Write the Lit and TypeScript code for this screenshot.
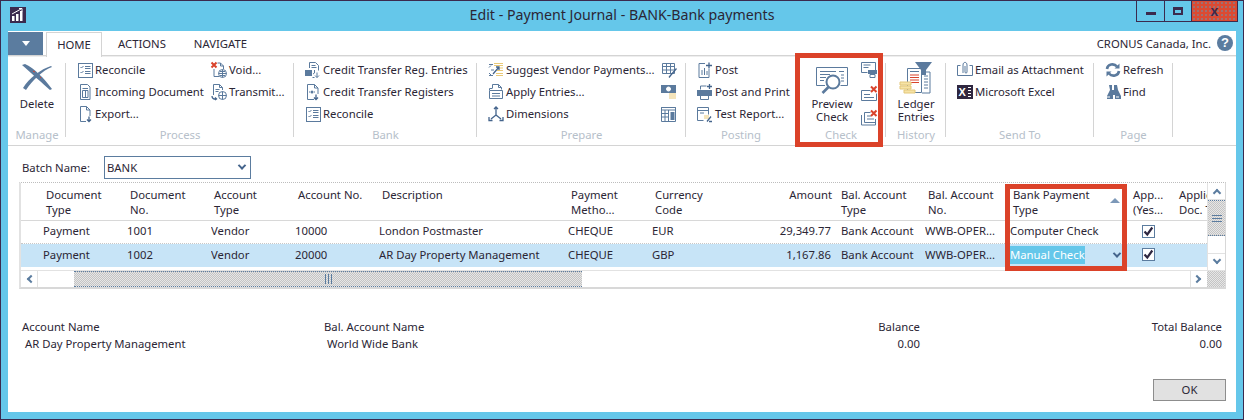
import { LitElement, html, css, svg } from "lit";
import { customElement } from "lit/decorators.js";

const I: Record<string, any> = {
  reconcile: svg`<rect x="1.500" y="1.500" width="14" height="14"/><path d="M3.500 5l1 1 2-2M3.500 10l1 1 2-2M8 4.500h5.500M8 6.500h5.500M8 9.500h5.500M8 11.500h5.500"/>`,
  incoming: svg`<path d="M3.500.5h7l2.500 2.500v12.500h-9.500zM5.500 4.500h5.500M5.500 6.500h5.500v7h-5.500zM8.500 6.500v7"/>`,
  exportDoc: svg`<path d="M9 15.500h-5.500v-15h6l3.500 3.500v6M9.500.5v3.500h3.500"/><path class="d" d="M12 10.500v5M10 13.500l2 2 2-2"/>`,
  voidDoc: svg`<path class="r2" d="M.5.5l5 5M5.500.5l-5 5"/><path d="M6.500 1h3l3 3v3M9.500 1v3h3M3 7v7.500h5"/><circle cx="11.500" cy="11.500" r="4"/><path d="M7.500 11.500h8M11.500 7.500v8M9 9.500h5M9 13.500h5"/>`,
  transmit: svg`<path d="M2.500 11v-10.500h6l3 3v2.500M8.500.5v3h3M4.500 5.500h4M4.500 7.500h3"/><path class="d" d="M1 12c0 2.500 2 3.500 4.500 3M4 13.500l1.500 1.500-1.500 1"/><circle cx="11.500" cy="11.500" r="4"/><path d="M7.500 11.500h8M11.500 7.500v8"/>`,
  ctEntries: svg`<path d="M4.500 6v-5.500h6l3 3v5M6.500 3.500h4M6.500 5.500h5"/><rect class="fs" x="0" y="8" width="7" height="6"/><path d="M9.500 8v3l-1.500 1M12 15.500v-5M10 13.500l2 2 2-2M7.500 15.500h2"/>`,
  ctRegisters: svg`<path d="M9 15.500h-6.500v-15h7l3.500 3.500v6M9.500.5v3.500h3.500"/><circle class="fs" cx="7" cy="8" r="1.500"/><path d="M4 8h1M9 8h1"/><path class="d" d="M11 10.500v5M9 13.500l2 2 2-2"/>`,
  suggest: svg`<path class="y" d="M6 1.500h9M6 3.500h9M9 8.500h6M9 6h6"/><path d="M1 2.500h4M1 5.500l2-2M1 13.500h4M1 11l2 2M3 8h3"/><path class="y" d="M8 11.500h7M8 13.500h7"/><path class="d" d="M5 12l6-7M8 5h3v3"/>`,
  apply: svg`<path d="M1.500 6v-1.500h2.500M4.500 4.500v-4h6l3 3v2M10.500.5v3h3M1.500 6.500h13v8h-13zM4 9.500h8M4 12h8"/>`,
  dims: svg`<path class="d" d="M8 1v8M8 9l-5 4M8 9l5 4M6 3l2-2 2 2M1 11v3.500h3.500M15 11v3.500h-3.500"/>`,
  pEdit: svg`<path d="M1.500 1.500h12v10h-12zM1.500 4.500h12M5.500 1.500v10M9.500 1.500v10M1.500 8h12"/><path class="d" d="M15.500 6.500l-6 7-1.500 2"/>`,
  pCash: svg`<rect class="fs" x="0" y="1" width="15" height="8"/><circle cx="7.500" cy="5" r="2" fill="#fff" stroke="#fff"/><path class="y" d="M8 10h7M8 12h7M8 14h7"/>`,
  pCalc: svg`<path d="M.5 1.500h14v14h-14zM.5 1.500h14v2.500h-14zM.5 7.500h7M.5 11h7M4 4v11.500M7.500 4v11.500"/><rect class="fs" x="9.500" y="6" width="4" height="8"/>`,
  post: svg`<path d="M12 7v8.500h-10v-14h6M5 8v5M7.500 6v7M10 9v4"/><path class="d" d="M12 .5v6M9 3.500h6"/>`,
  postPrint: svg`<rect class="fs" x="0" y="6" width="15" height="6"/><path d="M3.500 5.500v-3.500h6M3.500 11.500h8v4h-8z"/><path class="d" d="M12.500 0v5M10 2.500h5"/>`,
  test: svg`<path d="M.5 1.500h11v7M.5 1.500v13h6M.5 4.500h11M3 7h4"/><path class="y" d="M7 10h5M7 12h5"/><path class="d" d="M10 15.500l4-5M12 15.500h3"/>`,
  ckPrint: svg`<path d="M.5.5h14v8h-5M.5.5v10h6M2.500 3h7M2.500 5.500h5"/><rect class="fs" x="7" y="8" width="9" height="4"/><path d="M9 12.500h5v3h-5z"/>`,
  ckX1: svg`<path d="M.5 4.500h9M.5 4.500v10h15v-7M3 8.500h6M3 11.500h10"/><path class="r2" d="M10 .5l5.500 5.500M15.500.5l-5.500 5.500"/>`,
  ckX2: svg`<path d="M3.500 2.500h6M.5 5v10h14v-6M3.500 2.500v10h11M6 6h4M6 9h7"/><path class="r2" d="M10 .5l5.500 5.500M15.500.5l-5.500 5.500"/>`,
  mail: svg`<path d="M.5 3.500h3M.5 3.500v10h15v-10h-3M6 11v-8c0-3.500 4-3.500 4 0v7c0 1.500-2 1.500-2 0v-6"/>`,
  excel: svg`<rect class="fk" x="0" y="1" width="16" height="14"/><text x="1.500" y="12" class="xl">X</text><path class="wl" d="M11 3.500h3M11 6.500h3M11 9.500h3M11 12.500h3"/>`,
  refresh: svg`<path class="thick" d="M2 7c.5-5 7-6 10-2.500M14 9c-.5 5-7 6-10 2.500"/><path class="fs" d="M14.500 1.500v5h-5zM1.500 14.500v-5h5z"/>`,
  find: svg`<path class="fs" d="M4 1h3v5h2v-5h3l1 5 3 6v3h-6v-4h-2v4h-6v-3l3-6z"/><path class="wl" d="M2 13h3M11 13h3"/>`,
};

const delX = svg`<path class="fs" d="M1 3l3-1c9 4 19 14 27 25l-2 1C21 21 10 11 1 3z"/><path class="fs" d="M30 4l1 1C22 8 11 19 5 28l-3-2C8 16 20 7 30 4z"/><path class="xd" d="M12 9l2 1M19 15l1 1"/>`;
const previewL = svg`<path d="M.5 .5h31v18h-7M9 18.500h-8.500v-18"/><path d="M4 4.500h16M4 7.500h10M4 10.500h6M4 13.500h4M23 4.500h5M25 8h3M25 11h3M25 14h3"/><circle cx="17" cy="15" r="6.500" fill="#fff" stroke-width="2"/><path class="thick" d="M12.500 20l-6 6"/>`;
const ledgerL = svg`<path d="M7.500 6.500h14v24h-14z"/><path class="r" d="M10 13h9M10 15.500h9M10 18h9M10 20.500h9"/><path d="M10 9.500h9M21.500 10h8.500v21h-8M24 14h4M24 17h4M24 20h4M24 23h4M24 26h4"/><path class="fs" d="M15 0h17l-6 8v5l-5 0v-5z"/><path class="y2" d="M0 20h11v3h-11zM0 24h11v3h-11zM4 28h11v3h-11z"/>`;
const logo = svg`<path fill="#fff" d="M2 9h2.500v5h-2.500zM6 7h2.500v7h-2.500zM10 4h2.500v10h-2.500z"/><path stroke="#fff" fill="none" d="M2 7l9-5M9 1.500h3v3"/>`;

const HEAD: { a: string; b?: string; right?: boolean; flush?: boolean; sort?: boolean }[] = [
  { a: "Document", b: "Type" }, { a: "Document", b: "No." }, { a: "Account", b: "Type" },
  { a: "Account No." }, { a: "Description" }, { a: "Payment", b: "Metho..." },
  { a: "Currency", b: "Code" }, { a: "Amount", right: true }, { a: "Bal. Account", b: "Type", flush: true },
  { a: "Bal. Account", b: "No." }, { a: "Bank Payment", b: "Type", sort: true }, { a: "App...", b: "(Yes..." }, { a: "Applie", b: "Doc. T" },
];
const ROWS = [
  ["Payment", "1001", "Vendor", "10000", "London Postmaster", "CHEQUE", "EUR", "29,349.77", "Bank Account", "WWB-OPER...", "Computer Check"],
  ["Payment", "1002", "Vendor", "20000", "AR Day Property Management", "CHEQUE", "GBP", "1,167.86", "Bank Account", "WWB-OPER...", "Manual Check"],
];

@customElement("app-root")
export class AppRoot extends LitElement {
  static styles = css`
    :host { display: block; position: relative; width: 1244px; height: 420px; box-sizing: border-box; overflow: hidden;
      background: #65c7ea; border: 1px solid #3b2a4e; padding: 0 7px 7px 7px;
      font: 11.3px/15px "Noto Sans", sans-serif; color: #2b2635; }
    * { box-sizing: border-box; }
    svg.ic { display: block; flex: none; fill: none; stroke: #5b7a9d; stroke-width: 1; overflow: visible; }
    svg .r, svg .r2 { stroke: #d9432c; } svg .r2 { stroke-width: 2; }
    svg .y { stroke: #e9c978; stroke-width: 1.2; }
    svg .y2 { fill: #f6e3a6; stroke: #e3c77b; }
    svg .d { stroke: #44648c; stroke-width: 1.3; }
    svg .fs { fill: #5b7a9d; stroke: none; }
    svg .fk { fill: #2f2740; stroke: none; }
    svg .wl { stroke: #fff; stroke-width: 1.2; }
    svg .thick { stroke-width: 2.600; stroke: #5b7a9d; }
    svg .xd { stroke: #d9432c; stroke-width: 1; }
    svg .xl { fill: #fff; stroke: none; font: bold 11px "Liberation Sans", sans-serif; }

    .titlebar { display: grid; grid-template-columns: 1fr auto 1fr; height: 30px; align-items: start; }
    .logo { width: 16px; height: 16px; margin: 6px 0 0 2px; background: #3b2a4e; display: block; }
    .title { font-size: 14.2px; line-height: 28px; text-align: center; white-space: nowrap; }
    .ctrls { justify-self: end; display: flex; height: 21px; border: 1px solid #3b2a4e; border-top: 0; margin-right: -2px; }
    .ctrl { display: flex; align-items: center; justify-content: center; border-left: 1px solid #3b2a4e; width: 27px; }
    .ctrl:first-child { border-left: 0; }
    .ctrl.close { width: 46px; background: #db4a32 radial-gradient(#5a9ab8 .6px, transparent .8px) 0 0 / 4px 4px; }
    .min { width: 10px; height: 3px; background: #3b2a4e; margin-top: 4px; }
    .max { width: 10px; height: 8px; border: 2px solid #3b2a4e; border-top-width: 3px; }
    .x { font: bold 14px/14px "Liberation Sans", sans-serif; color: #3b2a4e; }

    .client { background: #fff; height: 381px; display: flex; flex-direction: column; }
    .tabs { display: flex; height: 24px; align-items: stretch; padding-top: 1px; flex: none; }
    .menu { width: 35px; background: #5b7c9f; display: flex; align-items: center; justify-content: center; }
    .menu i { width: 0; height: 0; border: 4px solid transparent; border-top: 5px solid #fff; border-bottom: 0; }
    .tab { padding: 4px 0 0; line-height: 15px; }
    .tab.home { width: 56px; margin-left: 3px; text-align: center; border: 1px solid #d4d4d4; border-bottom: 0; margin-bottom: -2px; background: #fff; position: relative; z-index: 1; }
    .tab.act { margin-left: 16px; } .tab.nav { margin-left: 28px; }
    .company { margin-left: auto; display: flex; gap: 6px; align-items: flex-start; padding: 4px 3px 0 0; }
    .help { width: 16px; height: 16px; margin-top: -1px; border-radius: 50%; background: #5b7c9f; color: #fff; font: bold 13px/16px "Liberation Sans", sans-serif; text-align: center; }

    .ribbon { height: 91px; flex: none; border-top: 1px solid #d4d4d4; border-bottom: 1px solid #d4d4d4; box-shadow: inset 0 1px 0 #eee; display: flex; padding-top: 3px; }
    .group { display: flex; flex-direction: column; height: 78px; background: linear-gradient(#d4d4d4,#d4d4d4) right bottom / 1px 74px no-repeat; }
    .gbody { height: 69px; flex: none; display: flex; padding-left: 11px; }
    .glabel { text-align: center; color: #b6c0ca; line-height: 14px; height: 14px; }
    .col { display: flex; flex-direction: column; }
    .item { display: flex; flex: none; height: 22px; align-items: center; gap: 2px; white-space: nowrap; line-height: 16px; }
    .big { display: flex; flex-direction: column; align-items: center; text-align: center; padding-top: 3px; }
    .big .lbl { line-height: 13px; }
    .g-manage { width: 58px; } .g-manage .big { width: 56px; margin-left: -10px; }
    .g-process { width: 228px; } .g-process .c1 { width: 134px; }
    .g-bank { width: 183px; }
    .g-prepare { width: 209px; } .g-prepare .c1 { width: 173px; }
    .g-posting { width: 110px; background: none; }
    .g-check { width: 90px; }
    .g-check .big { width: 60px; margin-left: -5px; padding-top: 8px; }
    .g-check .mini { display: flex; flex-direction: column; gap: 8px; margin-left: -1px; padding-top: 3px; }
    .g-hist { width: 60px; } .g-hist .big { width: 60px; margin-left: -11px; }
    .g-send { width: 148px; } .g-page { width: 79px; }
    .spacer { height: 3px; flex: none; }

    .batch { display: flex; flex: none; align-items: center; height: 36px; padding: 6px 0 0 14px; }
    .batch .blabel { width: 82px; }
    .select { width: 147px; height: 23px; border: 1px solid #5b7c9f; display: flex; align-items: center; justify-content: space-between; padding: 0 5px 0 2px; }
    .chev { width: 6px; height: 6px; border: solid #44648c; border-width: 0 2px 2px 0; transform: rotate(45deg) translate(-1px,-1px); }

    .grid { flex: none; margin: 0 10px 0 11px; border-top: 1px dotted #bdbdbd; border-left: 2px solid #e2e2e2; border-bottom: 2px solid #d8d8d8; border-right: 1px solid #d8d8d8; width: 1207px; height: 107px; display: grid; grid-template-columns: 1186px 18px; grid-template-rows: 87px 17px; }
    .table { overflow: hidden; position: relative; }
    .tr { display: grid; grid-template-columns: 22px 84px 84px 84px 84px 189px 84px 84px 105px 84px 85px 120px 46px 40px; }
    .th { height: 38px; border-bottom: 1px solid #d8d8d8; }
    .th > div { padding-left: 3px; line-height: 15px; padding-top: 4px; white-space: nowrap; position: relative; }
    .th > div:first-child { padding: 0; }
    .th .right { text-align: right; padding: 4px 9px 0 0; }
    .th .flush { padding-left: 0; }
    .sort { position: absolute; right: 10px; top: 15px; width: 0; height: 0; border: 5px solid transparent; border-top: 0; border-bottom: 5px solid #7c98b8; }
    .td { height: 23px; align-items: center; white-space: nowrap; line-height: 20px; padding-bottom: 2px; }
    .td > div { overflow: hidden; }
    .td.one { border-bottom: 1px dotted #c8c8c8; }
    .td.sel { background: #c7e4f7; }
    .td .right { text-align: right; padding-right: 10px; }
    .td .pick { display: flex; align-items: center; justify-content: space-between; padding-right: 10px; overflow: visible; }
    .hl { background: #65c7ea; color: #fff; line-height: 18px; }
    .cb { width: 13px; height: 13px; border: 1px solid #5b7c9f; background: #fff; margin-left: 12px; display: flex; align-items: center; justify-content: center; }
    .vbar { border-left: 1px solid #e2e2e2; display: flex; flex-direction: column; }
    .arrow { height: 17px; display: flex; align-items: center; justify-content: center; border-bottom: 1px solid #e2e2e2; background: #fff; flex: none; }
    .arrow.bottom { border-top: 1px solid #e2e2e2; border-bottom: 0; margin-top: auto; }
    .arr { width: 6px; height: 6px; border: solid #5b7c9f; border-width: 2px 0 0 2px; }
    .arr.up { transform: translateY(2px) rotate(45deg); } .arr.down { transform: translateY(-2px) rotate(225deg); }
    .arr.left { transform: translateX(2px) rotate(-45deg); } .arr.rt { transform: translateX(-2px) rotate(135deg); }
    .dots { background-color: #e6e6e6; background-image: conic-gradient(#c4c4c4 25%, transparent 0 50%, #c4c4c4 0 75%, transparent 0); background-size: 2px 2px; }
    .vthumb { height: 36px; flex: none; border-top: 1px dotted #5b7c9f; border-bottom: 1px dotted #5b7c9f; display: flex; align-items: center; justify-content: center; }
    .gripv { width: 10px; height: 7px; border-top: 1px solid #5b7c9f; border-bottom: 1px solid #5b7c9f; background: linear-gradient(#5b7c9f,#5b7c9f) center/100% 1px no-repeat; }
    .hbar { border-top: 1px solid #e2e2e2; display: flex; }
    .harrow { width: 17px; display: flex; align-items: center; justify-content: center; border-right: 1px solid #e2e2e2; flex: none; }
    .harrow.rt { border-right: 0; border-left: 1px solid #e2e2e2; margin-left: auto; }
    .htrack { width: 36px; flex: none; }
    .hthumb { width: 508px; flex: none; border-top: 1px dotted #5b7c9f; border-bottom: 1px dotted #5b7c9f; display: flex; align-items: center; justify-content: center; }
    .griph { width: 7px; height: 10px; border-left: 1px solid #5b7c9f; border-right: 1px solid #5b7c9f; background: linear-gradient(#5b7c9f,#5b7c9f) center/1px 100% no-repeat; }
    .corner { border-top: 1px solid #e2e2e2; }

    .totals { flex: none; display: grid; grid-template-columns: 302px 300px 296px 302px; margin-top: 29px; padding: 0 14px; line-height: 17px; }
    .totals .v { padding-left: 3px; }
    .totals .e { text-align: right; }
    .footer { display: flex; justify-content: flex-end; padding: 27px 10px 0 0; }
    .ok { width: 73px; height: 22px; background: #e1e1e1; border: 1px solid #8d8d8d; text-align: center; line-height: 20px; }

    .redbox { position: absolute; border: 5px solid #db4229; pointer-events: none; }
    .rb1 { left: 794px; top: 52px; width: 88px; height: 94px; }
    .rb2 { left: 1004px; top: 183px; width: 122px; height: 87px; }
  `;

  private ic(n: string) {
    return html`<svg class="ic" width="16" height="16" viewBox="0 0 16 16">${I[n]}</svg>`;
  }
  private it(n: string, t: string) {
    return html`<div class="item">${this.ic(n)}<span>${t}</span></div>`;
  }

  render() {
    return html`
      <div class="titlebar">
        <svg class="logo" viewBox="0 0 16 16">${logo}</svg>
        <div class="title">Edit - Payment Journal - BANK-Bank payments</div>
        <div class="ctrls">
          <div class="ctrl"><div class="min"></div></div>
          <div class="ctrl"><div class="max"></div></div>
          <div class="ctrl close"><span class="x">x</span></div>
        </div>
      </div>
      <div class="client">
        <div class="tabs">
          <div class="menu"><i></i></div>
          <div class="tab home">HOME</div>
          <div class="tab act">ACTIONS</div>
          <div class="tab nav">NAVIGATE</div>
          <div class="company"><span>CRONUS Canada, Inc.</span><div class="help">?</div></div>
        </div>
        <div class="ribbon">
          <div class="group g-manage">
            <div class="gbody"><div class="big">
              <svg class="ic" width="32" height="32" viewBox="0 0 32 32">${delX}</svg>
              <div class="spacer"></div><div class="lbl">Delete</div></div></div>
            <div class="glabel">Manage</div>
          </div>
          <div class="group g-process">
            <div class="gbody">
              <div class="col c1">${this.it("reconcile", "Reconcile")}${this.it("incoming", "Incoming Document")}${this.it("exportDoc", "Export...")}</div>
              <div class="col">${this.it("voidDoc", "Void...")}${this.it("transmit", "Transmit...")}</div>
            </div>
            <div class="glabel">Process</div>
          </div>
          <div class="group g-bank">
            <div class="gbody"><div class="col">
              ${this.it("ctEntries", "Credit Transfer Reg. Entries")}${this.it("ctRegisters", "Credit Transfer Registers")}${this.it("reconcile", "Reconcile")}
            </div></div>
            <div class="glabel">Bank</div>
          </div>
          <div class="group g-prepare">
            <div class="gbody">
              <div class="col c1">${this.it("suggest", "Suggest Vendor Payments...")}${this.it("apply", "Apply Entries...")}${this.it("dims", "Dimensions")}</div>
              <div class="col"><div class="item">${this.ic("pEdit")}</div><div class="item">${this.ic("pCash")}</div><div class="item">${this.ic("pCalc")}</div></div>
            </div>
            <div class="glabel">Prepare</div>
          </div>
          <div class="group g-posting">
            <div class="gbody"><div class="col">${this.it("post", "Post")}${this.it("postPrint", "Post and Print")}${this.it("test", "Test Report...")}</div></div>
            <div class="glabel">Posting</div>
          </div>
          <div class="group g-check">
            <div class="gbody">
              <div class="big">
                <svg class="ic" width="32" height="30" viewBox="0 0 32 30">${previewL}</svg>
                <div class="lbl">Preview</div><div class="lbl">Check</div></div>
              <div class="mini">${this.ic("ckPrint")}${this.ic("ckX1")}${this.ic("ckX2")}</div>
            </div>
            <div class="glabel">Check</div>
          </div>
          <div class="group g-hist">
            <div class="gbody"><div class="big">
              <svg class="ic" width="32" height="32" viewBox="0 0 32 32">${ledgerL}</svg>
              <div class="spacer"></div><div class="lbl">Ledger</div><div class="lbl">Entries</div></div></div>
            <div class="glabel">History</div>
          </div>
          <div class="group g-send">
            <div class="gbody"><div class="col">${this.it("mail", "Email as Attachment")}${this.it("excel", "Microsoft Excel")}</div></div>
            <div class="glabel">Send To</div>
          </div>
          <div class="group g-page">
            <div class="gbody"><div class="col">${this.it("refresh", "Refresh")}${this.it("find", "Find")}</div></div>
            <div class="glabel">Page</div>
          </div>
        </div>
        <div class="batch">
          <div class="blabel">Batch Name:</div>
          <div class="select"><span>BANK</span><div class="chev"></div></div>
        </div>
        <div class="grid">
          <div class="table">
            <div class="tr th">
              <div></div>
              ${HEAD.map(h => html`<div class="${h.right ? "right" : ""} ${h.flush ? "flush" : ""}">${h.a}<br />${h.b ?? ""}${h.sort ? html`<span class="sort"></span>` : ""}</div>`)}
            </div>
            ${ROWS.map((r, ri) => html`
              <div class="tr td ${ri === 0 ? "one" : "sel"}">
                <div></div>
                ${r.map((c, i) => i === 7 ? html`<div class="right">${c}</div>`
                  : i === 10 && ri === 1 ? html`<div class="pick"><span class="hl">${c}</span><div class="chev"></div></div>`
                  : html`<div>${c}</div>`)}
                <div><div class="cb"><svg width="11" height="11" viewBox="0 0 11 11" fill="none" stroke="#2f2740" stroke-width="2.200"><path d="M1.500 5.500l2.800 3 5-7"/></svg></div></div>
                <div></div>
              </div>`)}
          </div>
          <div class="vbar">
            <div class="arrow"><div class="arr up"></div></div>
            <div class="vthumb dots"><div class="gripv"></div></div>
            <div class="arrow bottom"><div class="arr down"></div></div>
          </div>
          <div class="hbar">
            <div class="harrow"><div class="arr left"></div></div>
            <div class="htrack"></div>
            <div class="hthumb dots"><div class="griph"></div></div>
            <div class="harrow rt"><div class="arr rt"></div></div>
          </div>
          <div class="corner dots"></div>
        </div>
        <div class="totals">
          <div>Account Name</div><div>Bal. Account Name</div><div class="e">Balance</div><div class="e">Total Balance</div>
          <div class="v">AR Day Property Management</div><div class="v">World Wide Bank</div><div class="e">0.00</div><div class="e">0.00</div>
        </div>
        <div class="footer"><div class="ok">OK</div></div>
      </div>
      <div class="redbox rb1"></div>
      <div class="redbox rb2"></div>
    `;
  }
}
